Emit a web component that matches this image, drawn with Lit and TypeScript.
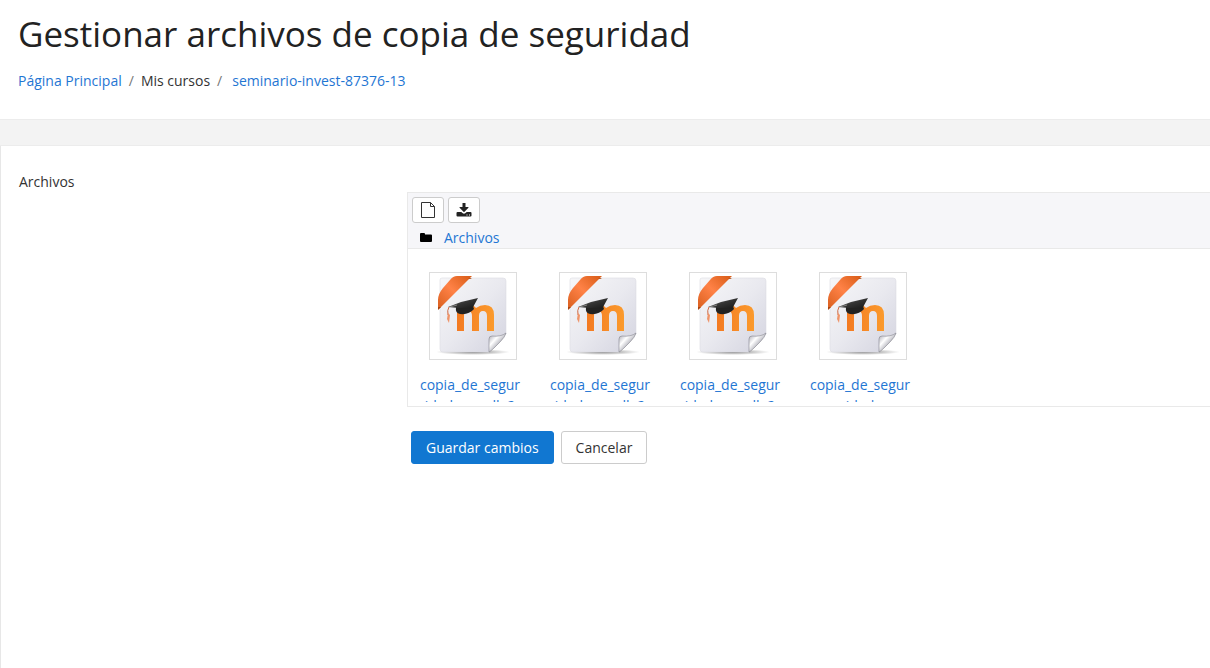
import { LitElement, html, css } from "lit";
import { customElement } from "lit/decorators.js";

const files = [
  "copia_de_seguridad-moodle2",
  "copia_de_seguridad-moodle2",
  "copia_de_seguridad-moodle2",
  "copia_de_seguridad",
];

@customElement("backup-icon")
class BackupIcon extends LitElement {
  static styles = css`
    :host { display: block; }
    svg { display: block; width: 80px; height: 80px; }
  `;
  render() {
    return html`<svg viewBox="0 0 80 80" aria-hidden="true">
      <defs>
        <linearGradient id="sheet" x1="0" y1="0" x2="1" y2="1"><stop offset="0" stop-color="#f6f6f8"/><stop offset=".5" stop-color="#e9e9ef"/><stop offset="1" stop-color="#d3d3df"/></linearGradient>
        <linearGradient id="ribbon" x1="0" y1="1" x2="1" y2="0"><stop offset="0" stop-color="#d95f1e"/><stop offset=".5" stop-color="#ff8247"/><stop offset="1" stop-color="#d75b15"/></linearGradient>
        <linearGradient id="letter" x1="0" y1="0" x2="1" y2="0"><stop offset="0" stop-color="#f37a22"/><stop offset="1" stop-color="#fb9a2c"/></linearGradient>
        <linearGradient id="cap" x1="0" y1="0" x2="1" y2="1"><stop offset="0" stop-color="#777"/><stop offset=".5" stop-color="#333"/><stop offset="1" stop-color="#161616"/></linearGradient>
        <linearGradient id="fold" x1="0" y1="0" x2="1" y2="1"><stop offset=".1" stop-color="#b9b9c2"/><stop offset=".35" stop-color="#fff"/><stop offset=".6" stop-color="#b4b4bd"/></linearGradient>
        <radialGradient id="shade"><stop offset="0" stop-color="#555" stop-opacity=".8"/><stop offset="1" stop-color="#777" stop-opacity="0"/></radialGradient>
      </defs>
      <ellipse cx="40" cy="76" rx="37" ry="3" fill="url(#shade)"/>
      <path d="M9 2H70Q73 2 73 5V58L56 76H10Q7 76 7 73V4Q7 2 9 2Z" fill="url(#sheet)" stroke="#dcdce2" stroke-width=".6"/>
      <path d="M56 76V63Q56 60 59 60Q68 61 73 57Q72 61 67 66L61 72Q58 75 56 76Z" fill="url(#fold)" stroke="#85858d" stroke-width=".6"/>
      <path d="M5 24Q5 18 10 12L17 4Q20 0 24 0H39L7 32Q5 34 5 31Z" fill="url(#ribbon)"/>
      <path d="M5 31V34L8 31ZM35 2H39L37 3Z" fill="#a94410"/>
      <path d="M24 55V33Q29 29 36 29Q41 29 43 32Q47 29 52 29Q61 29 61 39V55H54V40Q54 35 50 35Q46 35 46 40V55H39V40Q39 35 35 35Q31 35 31 40V55Z" fill="url(#letter)"/>
      <path d="M23 31Q28 29 40 30L41 33Q36 39 27 38Q22 37 23 31Z" fill="#222"/>
      <path d="M15 31L28 26L45 22L39 33Q34 31 26 32Z" fill="url(#cap)"/>
      <path d="M17 31L24 29" stroke="#ccc" stroke-width=".5"/>
      <path d="M16 31Q14 34 15 39" fill="none" stroke="#cf6842" stroke-width="1"/>
      <path d="M15 37L17 39L16 47L14 43Z" fill="#ef9469"/>
    </svg>`;
  }
}

@customElement("app-root")
class AppRoot extends LitElement {
  static styles = css`
    :host { display: flex; flex-direction: column; min-height: 100vh; background: #fff; color: #333; font: 14px/20px "Open Sans", sans-serif; overflow-x: hidden; }
    * { box-sizing: border-box; }
    a { color: #1f76d3; text-decoration: none; }
    .header { padding: 12px 18px 28px; }
    h1 { margin: 0 0 15px; font-size: 35px; line-height: 44px; font-weight: 400; color: #222; }
    ol { display: flex; flex-wrap: wrap; list-style: none; padding: 0; margin: 0; }
    .separator { color: #777; padding: 0 7px; }
    .last { padding-left: 3px; }
    .band { height: 27px; background: #f3f3f3; border-top: 1px solid #ececec; border-bottom: 1px solid #ececec; }
    .content { flex: 1; display: grid; grid-template-columns: 388px minmax(0, 1fr); align-content: start; padding: 26px 0 24px 18px; border-left: 1px solid #e7e7e7; }
    .field { padding-top: 20px; }
    .manager { border: 1px solid #e9e9e9; border-right: 0; }
    .toolbar { background: #f6f6f9; border-bottom: 1px solid #e9e9e9; padding: 4px 4px 0; }
    .tools { display: flex; gap: 4px; }
    .tools button { display: grid; place-items: center; width: 32px; height: 26px; padding: 0; background: #fff; border: 1px solid #ccc; border-radius: 3px; }
    .path { display: flex; align-items: center; gap: 12px; height: 25px; padding: 4px 8px 0; }
    .files { display: flex; flex-wrap: wrap; gap: 28px; height: 157px; padding: 23px 11px 4px; overflow: hidden; }
    .file { display: block; width: 102px; height: 130px; line-height: 21px; overflow: hidden; text-align: center; overflow-wrap: anywhere; }
    .thumb { width: 88px; margin: 0 4px 14px 10px; padding: 3px; border: 1px solid #ddd; }
    .actions { display: flex; gap: 7px; padding: 24px 4px; }
    .actions button { height: 33px; border: 1px solid #ccc; border-radius: 3px; padding: 0 14px; font: inherit; background: #fff; color: #333; }
    .actions .primary { background: #1177d1; border-color: #1177d1; color: #fff; }
  `;
  render() {
    return html`
      <header class="header">
        <h1>Gestionar archivos de copia de seguridad</h1>
        <nav aria-label="Ruta"><ol>
          <li><a href="#">Página Principal</a></li><li class="separator">/</li>
          <li>Mis cursos</li><li class="separator">/</li>
          <li class="last"><a href="#">seminario-invest-87376-13</a></li>
        </ol></nav>
      </header>
      <div class="band"></div>
      <main class="content">
        <div id="files-label">Archivos</div>
        <div class="field">
          <section class="manager" aria-labelledby="files-label">
            <div class="toolbar">
              <div class="tools">
                <button type="button" aria-label="Agregar"><svg width="16" height="18" viewBox="0 0 16 18" fill="none" stroke="#333"><path d="M1.500 1.500H10.500L14.500 5.500V16.500H1.500ZM10.500 1.500V5.500H14.500"/></svg></button>
                <button type="button" aria-label="Descargar"><svg width="16" height="16" viewBox="0 0 16 16" fill="#222"><path d="M6.500 1H9.500V5H12Q13 5 12.400 5.800L8.500 9.700Q8 10.100 7.500 9.700L3.600 5.800Q3 5 4 5H6.500ZM1.500 10H5.300L6.800 11.300Q8 12.200 9.200 11.300L10.700 10H14.500Q15.500 10 15.500 11V13.500Q15.500 14.500 14.500 14.500H1.500Q.5 14.500 .5 13.500V11Q.5 10 1.500 10ZM10.500 12.500V13.500H11.500V12.500ZM13 12.500V13.500H14V12.500Z" fill-rule="evenodd"/></svg></button>
              </div>
              <div class="path"><svg width="12" height="10" viewBox="0 0 12 10" aria-hidden="true"><path d="M0 1Q0 0 1 0H4Q5 0 5 1V1.500H11Q12 1.500 12 2.500V8Q12 9 11 9H1Q0 9 0 8Z"/></svg><a href="#">Archivos</a></div>
            </div>
            <div class="files">${files.map((name) => html`<a class="file" href="#"><backup-icon class="thumb"></backup-icon>${name}</a>`)}</div>
          </section>
          <div class="actions"><button class="primary" type="button">Guardar cambios</button><button type="button">Cancelar</button></div>
        </div>
      </main>`;
  }
}
